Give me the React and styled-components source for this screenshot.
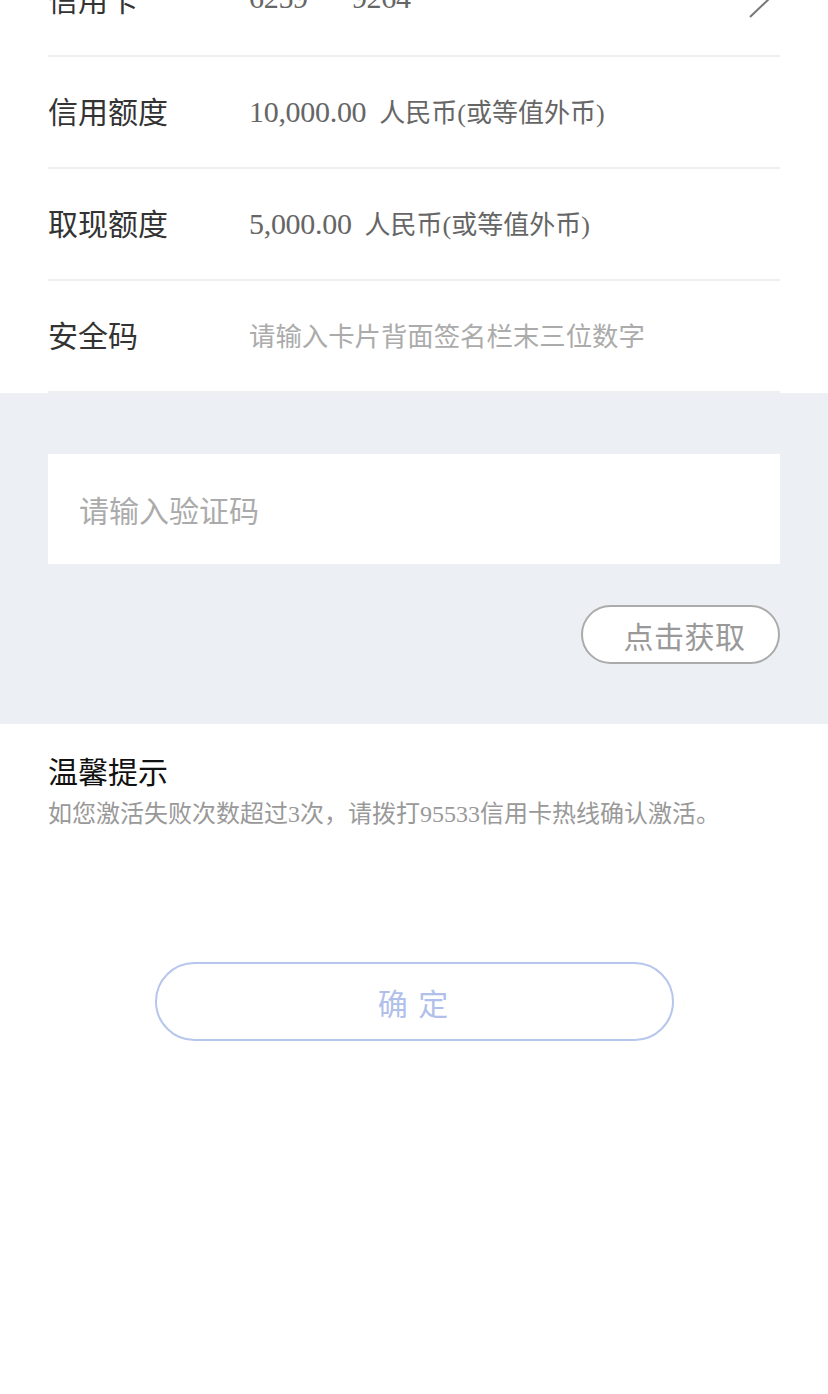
import React from "react";
import styled, { createGlobalStyle } from "styled-components";

const Global = createGlobalStyle`
  html, body { margin: 0; padding: 0; background: #ffffff; }
  body { font-family: "Noto Sans CJK SC", "Noto Sans", sans-serif; }
  * { box-sizing: border-box; }
`;

const Page = styled.div`
  margin-top: -55px;
  width: 828px;
  min-height: 1450px;
  background: #fff;
`;

const List = styled.div`
  padding: 0 48px;
`;

const Row = styled.div`
  height: 112px;
  display: flex;
  align-items: center;
  padding-bottom: 4px;
  border-bottom: 2px solid #efefef;
`;

const Label = styled.div`
  width: 201px;
  flex: none;
  font-size: 30px;
  color: #333;
  font-family: "Noto Sans CJK SC", sans-serif;
`;

const Value = styled.div`
  flex: 1;
  display: flex;
  align-items: baseline;
  font-family: "Liberation Serif", "Noto Sans CJK SC", serif;
  color: #666;
  white-space: pre;
`;

const Amount = styled.span`
  font-size: 30px;
  letter-spacing: -0.3px;
`;

const Unit = styled.span`
  font-size: 26px;
`;

const Placeholder = styled.div`
  flex: 1;
  font-family: "Noto Sans CJK SC", sans-serif;
  font-size: 26.4px;
  color: #ababab;
`;

const Chevron = styled.svg`
  flex: none;
  width: 26px;
  height: 44px;
  margin-right: 7px;
`;

const GraySection = styled.div`
  background: #eceff4;
  padding: 61px 48px 60px;
`;

const CodeInput = styled.input`
  display: block;
  width: 100%;
  height: 110px;
  border: none;
  outline: none;
  background: #fff;
  padding: 0 0 0 31px;
  font-family: "Noto Sans CJK SC", sans-serif;
  font-size: 30px;
  color: #333;
  &::placeholder { color: #ababab; }
`;

const ButtonRow = styled.div`
  display: flex;
  justify-content: flex-end;
  margin-top: 41px;
`;

const CodeButton = styled.button`
  width: 199px;
  height: 59px;
  border: 2px solid #ababab;
  border-radius: 30px;
  background: #fff;
  color: #999;
  font-family: "Noto Sans CJK SC", sans-serif;
  font-size: 30px;
  letter-spacing: 0.5px;
  padding: 0 0 0 8px;
  line-height: 1;
`;

const Tips = styled.div`
  padding: 28px 48px 0;
`;

const TipTitle = styled.div`
  font-size: 30px;
  line-height: 36px;
  color: #111;
`;

const TipText = styled.div`
  margin-top: 10px;
  font-family: "Liberation Serif", "Noto Sans CJK SC", serif;
  font-size: 24px;
  line-height: 32px;
  color: #999;
`;

const ConfirmWrap = styled.div`
  display: flex;
  justify-content: center;
  margin-top: 132px;
`;

const ConfirmButton = styled.button`
  width: 519px;
  height: 79px;
  border: 2px solid #b6c6ec;
  border-radius: 40px;
  background: #fff;
  color: #b0c0ea;
  font-family: "Noto Sans CJK SC", sans-serif;
  font-size: 30px;
  letter-spacing: 2px;
  line-height: 1;
`;

export default function App() {
  return (
    <>
      <Global />
      <Page>
        <List>
          <Row>
            <Label>信用卡</Label>
            <Value>
              <Amount>6259***9264</Amount>
            </Value>
            <Chevron viewBox="0 0 26 44">
              <polyline points="3,3 23,22 3,41" fill="none" stroke="#777" strokeWidth="2" />
            </Chevron>
          </Row>
          <Row>
            <Label>信用额度</Label>
            <Value>
              <Amount>10,000.00</Amount>
              <Unit>{"  人民币(或等值外币)"}</Unit>
            </Value>
          </Row>
          <Row>
            <Label>取现额度</Label>
            <Value>
              <Amount>5,000.00</Amount>
              <Unit>{"  人民币(或等值外币)"}</Unit>
            </Value>
          </Row>
          <Row>
            <Label>安全码</Label>
            <Placeholder>请输入卡片背面签名栏末三位数字</Placeholder>
          </Row>
        </List>
        <GraySection>
          <CodeInput placeholder="请输入验证码" />
          <ButtonRow>
            <CodeButton>点击获取</CodeButton>
          </ButtonRow>
        </GraySection>
        <Tips>
          <TipTitle>温馨提示</TipTitle>
          <TipText>如您激活失败次数超过3次，请拨打95533信用卡热线确认激活。</TipText>
        </Tips>
        <ConfirmWrap>
          <ConfirmButton>确 定</ConfirmButton>
        </ConfirmWrap>
      </Page>
    </>
  );
}
